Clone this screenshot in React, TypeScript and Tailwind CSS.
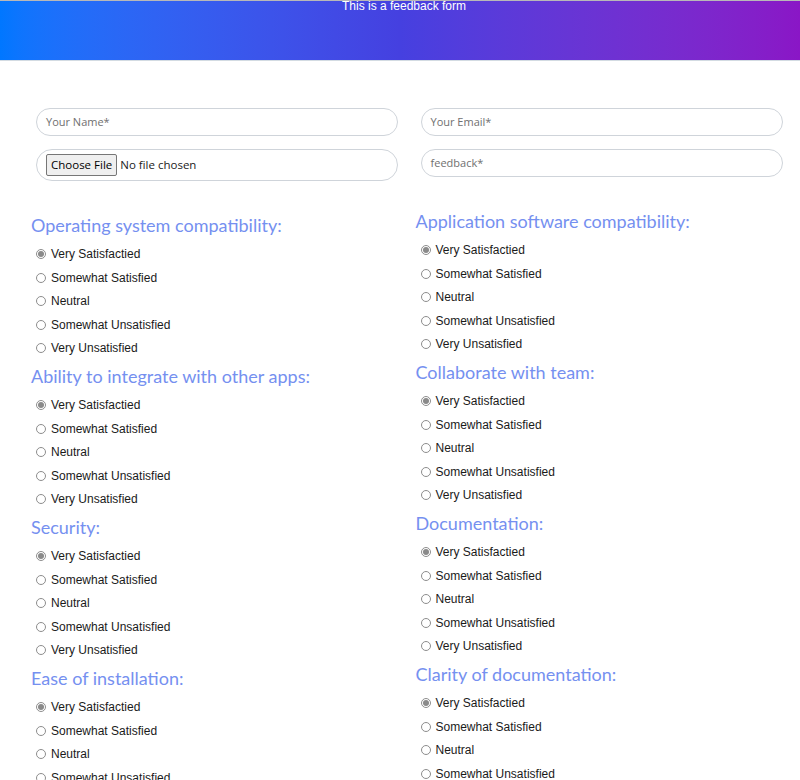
import React from 'react'

const OPTIONS = ['Very Satisfactied', 'Somewhat Satisfied', 'Neutral', 'Somewhat Unsatisfied', 'Very Unsatisfied']

const LEFT = ['Operating system compatibility:', 'Ability to integrate with other apps:', 'Security:', 'Ease of installation:']
const RIGHT = ['Application software compatibility:', 'Collaborate with team:', 'Documentation:', 'Clarity of documentation:']

function Radio({ checked }: { checked: boolean }) {
  return (
    <span className="flex h-[10px] w-[10px] shrink-0 items-center justify-center rounded-full border border-[#8d8d8d] bg-white">
      {checked && <span className="h-[6px] w-[6px] rounded-full bg-[#8a8a8a]" />}
    </span>
  )
}

function Question({ title }: { title: string }) {
  return (
    <div className="h-[151px]">
      <h2 className="h-[28px] pt-[1px] font-['Lato',sans-serif] text-[18px] leading-[26px] font-normal text-[#7590f0]">{title}</h2>
      <div className="mt-[3px] pl-[5px]">
        {OPTIONS.map((o, i) => (
          <label key={o} className="flex h-[23.5px] items-center gap-[5px] pt-[1px] font-['Liberation_Sans',Arial,sans-serif] text-[12px] text-[#1a1a1a]">
            <Radio checked={i === 0} />
            <span>{o}</span>
          </label>
        ))}
      </div>
    </div>
  )
}

function TextInput({ placeholder }: { placeholder: string }) {
  return (
    <div className="ml-[5px] flex h-[28px] w-[362px] items-center rounded-full border border-[#cfd4da] px-[9px] font-['Open_Sans',sans-serif] text-[11px] text-[#707070]">
      {placeholder}
    </div>
  )
}

export default function App() {
  return (
    <div className="min-h-[780px] bg-white">
      <header className="h-[61px] border-t border-b border-t-[#b8b8b8] border-b-[#d3dbe2] bg-gradient-to-r from-[#0077ff] via-[#4540e0] to-[#8a16c6] pl-[8px] text-center font-['Liberation_Sans',Arial,sans-serif] text-[12px] leading-[11px] text-white">
        This is a feedback form
      </header>
      <div className="grid grid-cols-2 pt-[47px] pl-[31px]">
        <div>
          <TextInput placeholder="Your Name*" />
          <div className="mt-[13px] ml-[5px] flex h-[32px] w-[362px] items-center gap-[3px] rounded-full border border-[#cfd4da] px-[9px] font-['Open_Sans',sans-serif] text-[11.5px] text-[#222]">
            <span className="rounded-[2px] border border-[#767676] bg-[#efefef] px-[4px] leading-[20px] text-black">Choose File</span>
            <span>No file chosen</span>
          </div>
          <div className="mt-[30px]">
            {LEFT.map((t) => (
              <Question key={t} title={t} />
            ))}
          </div>
        </div>
        <div>
          <TextInput placeholder="Your Email*" />
          <div className="mt-[13px]">
            <TextInput placeholder="feedback*" />
          </div>
          <div className="mt-[30px]">
            {RIGHT.map((t) => (
              <Question key={t} title={t} />
            ))}
          </div>
        </div>
      </div>
    </div>
  )
}
